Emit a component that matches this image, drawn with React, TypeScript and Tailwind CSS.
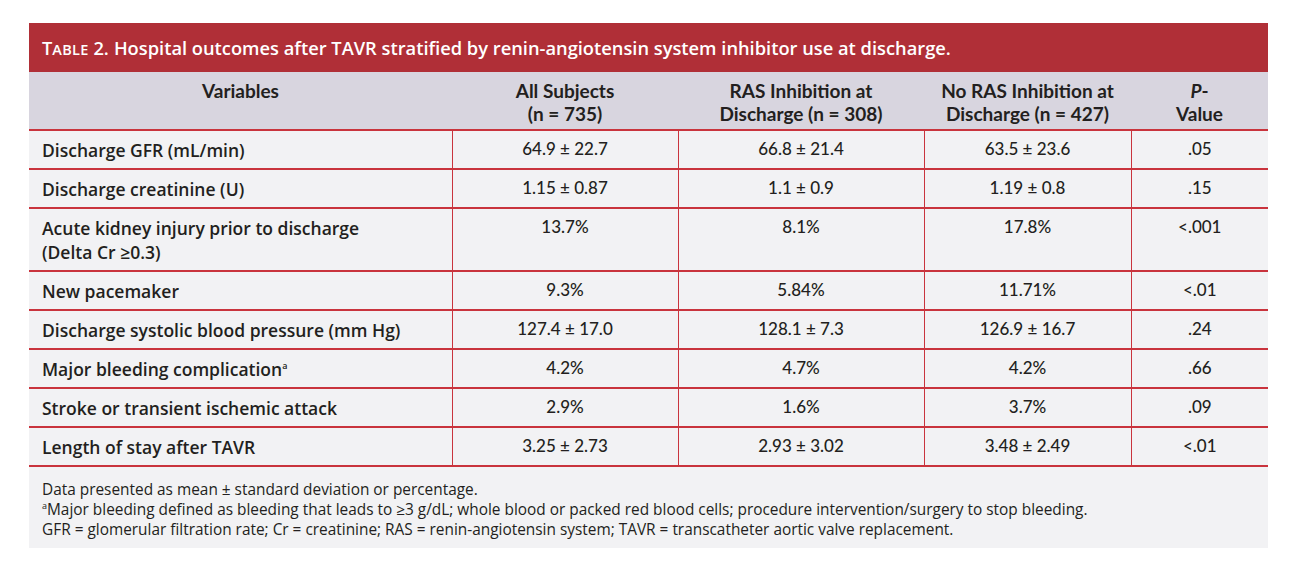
import React from 'react';

interface Row {
  label: React.ReactNode;
  all: string;
  ras: string;
  noRas: string;
  p: string;
}

const rows: Row[] = [
  { label: 'Discharge GFR (mL/min)', all: '64.9 ± 22.7', ras: '66.8 ± 21.4', noRas: '63.5 ± 23.6', p: '.05' },
  { label: 'Discharge creatinine (U)', all: '1.15 ± 0.87', ras: '1.1 ± 0.9', noRas: '1.19 ± 0.8', p: '.15' },
  {
    label: (
      <>
        Acute kidney injury prior to discharge
        <br />
        (Delta Cr ≥0.3)
      </>
    ),
    all: '13.7%',
    ras: '8.1%',
    noRas: '17.8%',
    p: '<.001',
  },
  { label: 'New pacemaker', all: '9.3%', ras: '5.84%', noRas: '11.71%', p: '<.01' },
  { label: 'Discharge systolic blood pressure (mm Hg)', all: '127.4 ± 17.0', ras: '128.1 ± 7.3', noRas: '126.9 ± 16.7', p: '.24' },
  {
    label: (
      <>
        Major bleeding complication<sup className="text-[9px] -top-[7px]">a</sup>
      </>
    ),
    all: '4.2%',
    ras: '4.7%',
    noRas: '4.2%',
    p: '.66',
  },
  { label: 'Stroke or transient ischemic attack', all: '2.9%', ras: '1.6%', noRas: '3.7%', p: '.09' },
  { label: 'Length of stay after TAVR', all: '3.25 ± 2.73', ras: '2.93 ± 3.02', noRas: '3.48 ± 2.49', p: '<.01' },
];

const App: React.FC = () => {
  return (
    <div className="w-[1300px] h-[582px] bg-white pt-[23px] pl-[29px] font-['Open_Sans','Noto_Sans',sans-serif] text-[#231f20]">
      <div className="w-[1239px]">
        {/* title bar */}
        <div className="bg-[#b02f37] h-[49px] flex items-center pl-[13px] text-white font-semibold text-[18.3px]">
          <span className="mr-[5px]">
            T<span className="text-[14.5px] tracking-[0.3px]">ABLE</span> 2.
          </span>
          Hospital outcomes after TAVR stratified by renin-angiotensin system inhibitor use at discharge.
        </div>

        <table className="w-full border-collapse table-fixed">
          <colgroup>
            <col className="w-[423px]" />
            <col className="w-[226px]" />
            <col className="w-[246px]" />
            <col className="w-[207px]" />
            <col className="w-[137px]" />
          </colgroup>
          <thead>
            <tr className="bg-[#d8d5df] border-b-2 border-[#c9343d] text-[19px] font-['Lato',sans-serif] leading-[23px] align-top">
              <th className="pt-[7px] pb-[4px] text-center font-bold">Variables</th>
              <th className="pt-[7px] pb-[4px] text-center font-bold">
                All Subjects
                <br />
                (n = 735)
              </th>
              <th className="pt-[7px] pb-[4px] text-center font-bold">
                RAS Inhibition at
                <br />
                Discharge (n = 308)
              </th>
              <th className="pt-[7px] pb-[4px] text-center font-bold">
                No RAS Inhibition at
                <br />
                Discharge (n = 427)
              </th>
              <th className="pt-[7px] pb-[4px] text-center font-bold">
                <i>P</i>-
                <br />
                Value
              </th>
            </tr>
          </thead>
          <tbody className="bg-[#f2f2f4]">
            {rows.map((r, i) => (
              <tr key={i} className="border-b-2 border-[#c9343d] align-top leading-[24px]">
                <td className="pl-[13px] pt-[7px] pb-[6px] text-[17.5px] font-semibold">{r.label}</td>
                <td className="border-l border-[#c9343d] pt-[6px] text-center text-[17px] font-medium font-['Lato',sans-serif]">{r.all}</td>
                <td className="border-l border-[#c9343d] pt-[6px] text-center text-[17px] font-medium font-['Lato',sans-serif]">{r.ras}</td>
                <td className="border-l border-[#c9343d] pt-[6px] text-center text-[17px] font-medium font-['Lato',sans-serif]">{r.noRas}</td>
                <td className="border-l border-[#c9343d] pt-[6px] text-center text-[17px] font-medium font-['Lato',sans-serif]">{r.p}</td>
              </tr>
            ))}
          </tbody>
        </table>

        {/* notes */}
        <div className="bg-[#f2f2f4] pl-[13px] pt-[13px] pb-[8px] text-[15.4px] leading-[20px]">
          <p>Data presented as mean ± standard deviation or percentage.</p>
          <p>
            <sup className="text-[9px] -top-[6px]">a</sup>Major bleeding defined as bleeding that leads to ≥3 g/dL; whole blood or packed red blood cells; procedure intervention/surgery to stop bleeding.
          </p>
          <p>GFR = glomerular filtration rate; Cr = creatinine; RAS = renin-angiotensin system; TAVR = transcatheter aortic valve replacement.</p>
        </div>
      </div>
    </div>
  );
};

export default App;
